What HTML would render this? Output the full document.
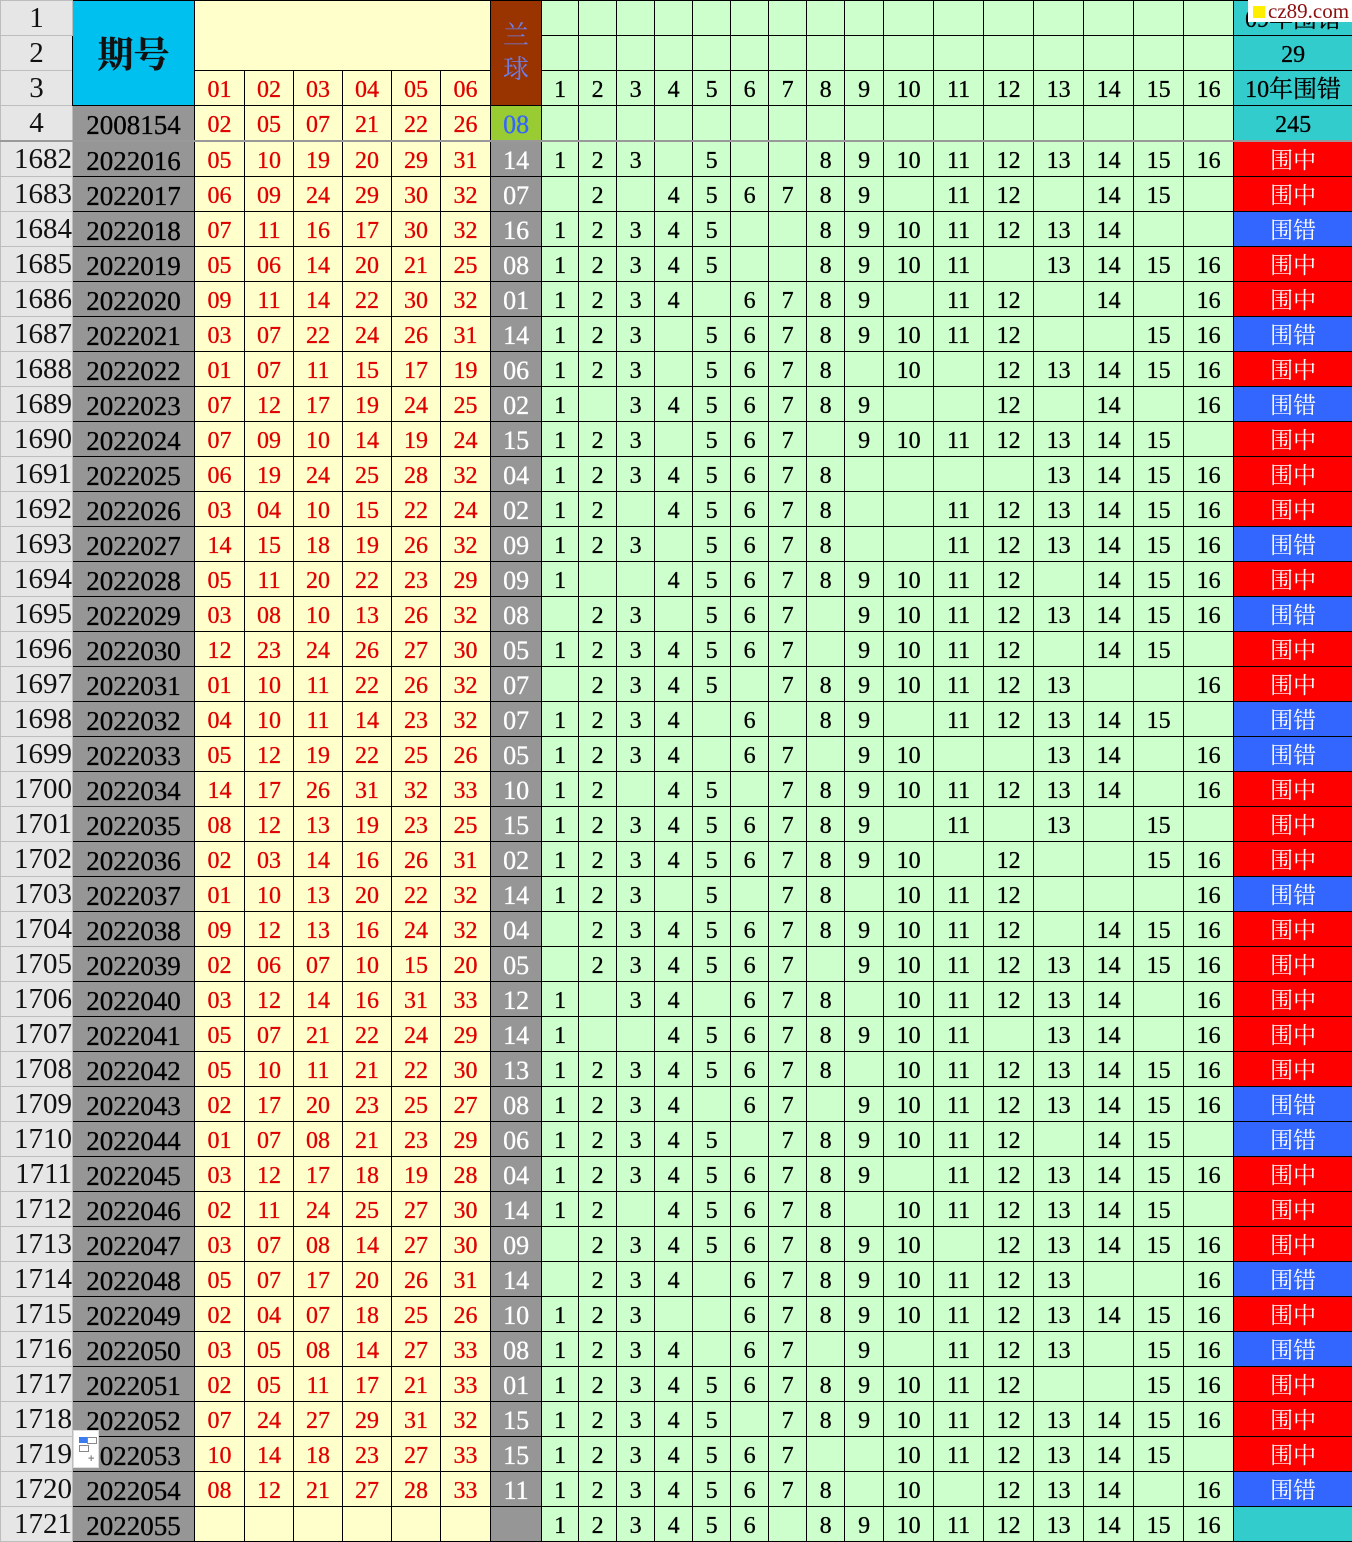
<!DOCTYPE html>
<html><head><meta charset="utf-8"><style>
body{margin:0;width:1352px;height:1542px;overflow:hidden;background:#fff;position:relative}
table{border-collapse:collapse;table-layout:fixed;position:absolute;left:0;top:0;width:1352px;font-family:"Liberation Serif","Noto Serif CJK SC",serif}
td{padding:4px 0 0 0;border:1px solid #000;text-align:center;white-space:nowrap;overflow:hidden;height:30px;line-height:30px;-webkit-text-stroke:0.3px}
tr{height:35px}
.n{background:#e6e6e6;border:1px solid #bdbdbd;font-size:29px;color:#111;text-align:right;-webkit-text-stroke:0;padding-top:0;height:34px;line-height:34px}
.p{background:#969696;font-size:27px;color:#000}
.r{background:#ffffcc;color:#e00000;font-size:24px}
.b{background:#969696;color:#fff;font-size:26px}
.g{background:#ccffcc;color:#000;font-size:24px}
.z{background:#ff0000;color:#fff;font-size:23px;-webkit-text-stroke:0}
.c{background:#3366ff;color:#fff;font-size:23px;-webkit-text-stroke:0}
.t{background:#33cccc;color:#000;font-size:24px}
.hd td{border-bottom:2px solid #999}
</style></head><body>
<table>
<colgroup><col style="width:72px"><col style="width:122px"><col style="width:50px"><col style="width:49px"><col style="width:49px"><col style="width:49px"><col style="width:49px"><col style="width:50px"><col style="width:51px"><col style="width:37px"><col style="width:38px"><col style="width:38px"><col style="width:38px"><col style="width:38px"><col style="width:38px"><col style="width:38px"><col style="width:38px"><col style="width:39px"><col style="width:50px"><col style="width:50px"><col style="width:50px"><col style="width:50px"><col style="width:50px"><col style="width:50px"><col style="width:50px"><col style="width:119px"></colgroup>
<tr><td class="n" style="text-align:center">1</td><td rowspan="3" style="background:#00c0f0;font-size:36px;font-weight:bold;color:#111;line-height:40px">期号</td><td colspan="6" rowspan="2" class="r"></td><td rowspan="3" style="background:#993300;color:#6f7fe8;font-size:26px;line-height:34px;white-space:normal;-webkit-text-stroke:0;padding:0">兰<br>球</td><td class="g"></td><td class="g"></td><td class="g"></td><td class="g"></td><td class="g"></td><td class="g"></td><td class="g"></td><td class="g"></td><td class="g"></td><td class="g"></td><td class="g"></td><td class="g"></td><td class="g"></td><td class="g"></td><td class="g"></td><td class="g"></td><td class="t">09年围错</td></tr>
<tr><td class="n" style="text-align:center">2</td><td class="g"></td><td class="g"></td><td class="g"></td><td class="g"></td><td class="g"></td><td class="g"></td><td class="g"></td><td class="g"></td><td class="g"></td><td class="g"></td><td class="g"></td><td class="g"></td><td class="g"></td><td class="g"></td><td class="g"></td><td class="g"></td><td class="t">29</td></tr>
<tr><td class="n" style="text-align:center">3</td><td class="r">01</td><td class="r">02</td><td class="r">03</td><td class="r">04</td><td class="r">05</td><td class="r">06</td><td class="g">1</td><td class="g">2</td><td class="g">3</td><td class="g">4</td><td class="g">5</td><td class="g">6</td><td class="g">7</td><td class="g">8</td><td class="g">9</td><td class="g">10</td><td class="g">11</td><td class="g">12</td><td class="g">13</td><td class="g">14</td><td class="g">15</td><td class="g">16</td><td class="t">10年围错</td></tr>
<tr class="hd"><td class="n" style="text-align:center">4</td><td class="p">2008154</td><td class="r">02</td><td class="r">05</td><td class="r">07</td><td class="r">21</td><td class="r">22</td><td class="r">26</td><td style="background:#99cc33;color:#3366ff;font-size:26px">08</td><td class="g"></td><td class="g"></td><td class="g"></td><td class="g"></td><td class="g"></td><td class="g"></td><td class="g"></td><td class="g"></td><td class="g"></td><td class="g"></td><td class="g"></td><td class="g"></td><td class="g"></td><td class="g"></td><td class="g"></td><td class="g"></td><td class="t">245</td></tr>
<tr><td class="n">1682</td><td class="p">2022016</td><td class="r">05</td><td class="r">10</td><td class="r">19</td><td class="r">20</td><td class="r">29</td><td class="r">31</td><td class="b">14</td><td class="g">1</td><td class="g">2</td><td class="g">3</td><td class="g"></td><td class="g">5</td><td class="g"></td><td class="g"></td><td class="g">8</td><td class="g">9</td><td class="g">10</td><td class="g">11</td><td class="g">12</td><td class="g">13</td><td class="g">14</td><td class="g">15</td><td class="g">16</td><td class="z">围中</td></tr>
<tr><td class="n">1683</td><td class="p">2022017</td><td class="r">06</td><td class="r">09</td><td class="r">24</td><td class="r">29</td><td class="r">30</td><td class="r">32</td><td class="b">07</td><td class="g"></td><td class="g">2</td><td class="g"></td><td class="g">4</td><td class="g">5</td><td class="g">6</td><td class="g">7</td><td class="g">8</td><td class="g">9</td><td class="g"></td><td class="g">11</td><td class="g">12</td><td class="g"></td><td class="g">14</td><td class="g">15</td><td class="g"></td><td class="z">围中</td></tr>
<tr><td class="n">1684</td><td class="p">2022018</td><td class="r">07</td><td class="r">11</td><td class="r">16</td><td class="r">17</td><td class="r">30</td><td class="r">32</td><td class="b">16</td><td class="g">1</td><td class="g">2</td><td class="g">3</td><td class="g">4</td><td class="g">5</td><td class="g"></td><td class="g"></td><td class="g">8</td><td class="g">9</td><td class="g">10</td><td class="g">11</td><td class="g">12</td><td class="g">13</td><td class="g">14</td><td class="g"></td><td class="g"></td><td class="c">围错</td></tr>
<tr><td class="n">1685</td><td class="p">2022019</td><td class="r">05</td><td class="r">06</td><td class="r">14</td><td class="r">20</td><td class="r">21</td><td class="r">25</td><td class="b">08</td><td class="g">1</td><td class="g">2</td><td class="g">3</td><td class="g">4</td><td class="g">5</td><td class="g"></td><td class="g"></td><td class="g">8</td><td class="g">9</td><td class="g">10</td><td class="g">11</td><td class="g"></td><td class="g">13</td><td class="g">14</td><td class="g">15</td><td class="g">16</td><td class="z">围中</td></tr>
<tr><td class="n">1686</td><td class="p">2022020</td><td class="r">09</td><td class="r">11</td><td class="r">14</td><td class="r">22</td><td class="r">30</td><td class="r">32</td><td class="b">01</td><td class="g">1</td><td class="g">2</td><td class="g">3</td><td class="g">4</td><td class="g"></td><td class="g">6</td><td class="g">7</td><td class="g">8</td><td class="g">9</td><td class="g"></td><td class="g">11</td><td class="g">12</td><td class="g"></td><td class="g">14</td><td class="g"></td><td class="g">16</td><td class="z">围中</td></tr>
<tr><td class="n">1687</td><td class="p">2022021</td><td class="r">03</td><td class="r">07</td><td class="r">22</td><td class="r">24</td><td class="r">26</td><td class="r">31</td><td class="b">14</td><td class="g">1</td><td class="g">2</td><td class="g">3</td><td class="g"></td><td class="g">5</td><td class="g">6</td><td class="g">7</td><td class="g">8</td><td class="g">9</td><td class="g">10</td><td class="g">11</td><td class="g">12</td><td class="g"></td><td class="g"></td><td class="g">15</td><td class="g">16</td><td class="c">围错</td></tr>
<tr><td class="n">1688</td><td class="p">2022022</td><td class="r">01</td><td class="r">07</td><td class="r">11</td><td class="r">15</td><td class="r">17</td><td class="r">19</td><td class="b">06</td><td class="g">1</td><td class="g">2</td><td class="g">3</td><td class="g"></td><td class="g">5</td><td class="g">6</td><td class="g">7</td><td class="g">8</td><td class="g"></td><td class="g">10</td><td class="g"></td><td class="g">12</td><td class="g">13</td><td class="g">14</td><td class="g">15</td><td class="g">16</td><td class="z">围中</td></tr>
<tr><td class="n">1689</td><td class="p">2022023</td><td class="r">07</td><td class="r">12</td><td class="r">17</td><td class="r">19</td><td class="r">24</td><td class="r">25</td><td class="b">02</td><td class="g">1</td><td class="g"></td><td class="g">3</td><td class="g">4</td><td class="g">5</td><td class="g">6</td><td class="g">7</td><td class="g">8</td><td class="g">9</td><td class="g"></td><td class="g"></td><td class="g">12</td><td class="g"></td><td class="g">14</td><td class="g"></td><td class="g">16</td><td class="c">围错</td></tr>
<tr><td class="n">1690</td><td class="p">2022024</td><td class="r">07</td><td class="r">09</td><td class="r">10</td><td class="r">14</td><td class="r">19</td><td class="r">24</td><td class="b">15</td><td class="g">1</td><td class="g">2</td><td class="g">3</td><td class="g"></td><td class="g">5</td><td class="g">6</td><td class="g">7</td><td class="g"></td><td class="g">9</td><td class="g">10</td><td class="g">11</td><td class="g">12</td><td class="g">13</td><td class="g">14</td><td class="g">15</td><td class="g"></td><td class="z">围中</td></tr>
<tr><td class="n">1691</td><td class="p">2022025</td><td class="r">06</td><td class="r">19</td><td class="r">24</td><td class="r">25</td><td class="r">28</td><td class="r">32</td><td class="b">04</td><td class="g">1</td><td class="g">2</td><td class="g">3</td><td class="g">4</td><td class="g">5</td><td class="g">6</td><td class="g">7</td><td class="g">8</td><td class="g"></td><td class="g"></td><td class="g"></td><td class="g"></td><td class="g">13</td><td class="g">14</td><td class="g">15</td><td class="g">16</td><td class="z">围中</td></tr>
<tr><td class="n">1692</td><td class="p">2022026</td><td class="r">03</td><td class="r">04</td><td class="r">10</td><td class="r">15</td><td class="r">22</td><td class="r">24</td><td class="b">02</td><td class="g">1</td><td class="g">2</td><td class="g"></td><td class="g">4</td><td class="g">5</td><td class="g">6</td><td class="g">7</td><td class="g">8</td><td class="g"></td><td class="g"></td><td class="g">11</td><td class="g">12</td><td class="g">13</td><td class="g">14</td><td class="g">15</td><td class="g">16</td><td class="z">围中</td></tr>
<tr><td class="n">1693</td><td class="p">2022027</td><td class="r">14</td><td class="r">15</td><td class="r">18</td><td class="r">19</td><td class="r">26</td><td class="r">32</td><td class="b">09</td><td class="g">1</td><td class="g">2</td><td class="g">3</td><td class="g"></td><td class="g">5</td><td class="g">6</td><td class="g">7</td><td class="g">8</td><td class="g"></td><td class="g"></td><td class="g">11</td><td class="g">12</td><td class="g">13</td><td class="g">14</td><td class="g">15</td><td class="g">16</td><td class="c">围错</td></tr>
<tr><td class="n">1694</td><td class="p">2022028</td><td class="r">05</td><td class="r">11</td><td class="r">20</td><td class="r">22</td><td class="r">23</td><td class="r">29</td><td class="b">09</td><td class="g">1</td><td class="g"></td><td class="g"></td><td class="g">4</td><td class="g">5</td><td class="g">6</td><td class="g">7</td><td class="g">8</td><td class="g">9</td><td class="g">10</td><td class="g">11</td><td class="g">12</td><td class="g"></td><td class="g">14</td><td class="g">15</td><td class="g">16</td><td class="z">围中</td></tr>
<tr><td class="n">1695</td><td class="p">2022029</td><td class="r">03</td><td class="r">08</td><td class="r">10</td><td class="r">13</td><td class="r">26</td><td class="r">32</td><td class="b">08</td><td class="g"></td><td class="g">2</td><td class="g">3</td><td class="g"></td><td class="g">5</td><td class="g">6</td><td class="g">7</td><td class="g"></td><td class="g">9</td><td class="g">10</td><td class="g">11</td><td class="g">12</td><td class="g">13</td><td class="g">14</td><td class="g">15</td><td class="g">16</td><td class="c">围错</td></tr>
<tr><td class="n">1696</td><td class="p">2022030</td><td class="r">12</td><td class="r">23</td><td class="r">24</td><td class="r">26</td><td class="r">27</td><td class="r">30</td><td class="b">05</td><td class="g">1</td><td class="g">2</td><td class="g">3</td><td class="g">4</td><td class="g">5</td><td class="g">6</td><td class="g">7</td><td class="g"></td><td class="g">9</td><td class="g">10</td><td class="g">11</td><td class="g">12</td><td class="g"></td><td class="g">14</td><td class="g">15</td><td class="g"></td><td class="z">围中</td></tr>
<tr><td class="n">1697</td><td class="p">2022031</td><td class="r">01</td><td class="r">10</td><td class="r">11</td><td class="r">22</td><td class="r">26</td><td class="r">32</td><td class="b">07</td><td class="g"></td><td class="g">2</td><td class="g">3</td><td class="g">4</td><td class="g">5</td><td class="g"></td><td class="g">7</td><td class="g">8</td><td class="g">9</td><td class="g">10</td><td class="g">11</td><td class="g">12</td><td class="g">13</td><td class="g"></td><td class="g"></td><td class="g">16</td><td class="z">围中</td></tr>
<tr><td class="n">1698</td><td class="p">2022032</td><td class="r">04</td><td class="r">10</td><td class="r">11</td><td class="r">14</td><td class="r">23</td><td class="r">32</td><td class="b">07</td><td class="g">1</td><td class="g">2</td><td class="g">3</td><td class="g">4</td><td class="g"></td><td class="g">6</td><td class="g"></td><td class="g">8</td><td class="g">9</td><td class="g"></td><td class="g">11</td><td class="g">12</td><td class="g">13</td><td class="g">14</td><td class="g">15</td><td class="g"></td><td class="c">围错</td></tr>
<tr><td class="n">1699</td><td class="p">2022033</td><td class="r">05</td><td class="r">12</td><td class="r">19</td><td class="r">22</td><td class="r">25</td><td class="r">26</td><td class="b">05</td><td class="g">1</td><td class="g">2</td><td class="g">3</td><td class="g">4</td><td class="g"></td><td class="g">6</td><td class="g">7</td><td class="g"></td><td class="g">9</td><td class="g">10</td><td class="g"></td><td class="g"></td><td class="g">13</td><td class="g">14</td><td class="g"></td><td class="g">16</td><td class="c">围错</td></tr>
<tr><td class="n">1700</td><td class="p">2022034</td><td class="r">14</td><td class="r">17</td><td class="r">26</td><td class="r">31</td><td class="r">32</td><td class="r">33</td><td class="b">10</td><td class="g">1</td><td class="g">2</td><td class="g"></td><td class="g">4</td><td class="g">5</td><td class="g"></td><td class="g">7</td><td class="g">8</td><td class="g">9</td><td class="g">10</td><td class="g">11</td><td class="g">12</td><td class="g">13</td><td class="g">14</td><td class="g"></td><td class="g">16</td><td class="z">围中</td></tr>
<tr><td class="n">1701</td><td class="p">2022035</td><td class="r">08</td><td class="r">12</td><td class="r">13</td><td class="r">19</td><td class="r">23</td><td class="r">25</td><td class="b">15</td><td class="g">1</td><td class="g">2</td><td class="g">3</td><td class="g">4</td><td class="g">5</td><td class="g">6</td><td class="g">7</td><td class="g">8</td><td class="g">9</td><td class="g"></td><td class="g">11</td><td class="g"></td><td class="g">13</td><td class="g"></td><td class="g">15</td><td class="g"></td><td class="z">围中</td></tr>
<tr><td class="n">1702</td><td class="p">2022036</td><td class="r">02</td><td class="r">03</td><td class="r">14</td><td class="r">16</td><td class="r">26</td><td class="r">31</td><td class="b">02</td><td class="g">1</td><td class="g">2</td><td class="g">3</td><td class="g">4</td><td class="g">5</td><td class="g">6</td><td class="g">7</td><td class="g">8</td><td class="g">9</td><td class="g">10</td><td class="g"></td><td class="g">12</td><td class="g"></td><td class="g"></td><td class="g">15</td><td class="g">16</td><td class="z">围中</td></tr>
<tr><td class="n">1703</td><td class="p">2022037</td><td class="r">01</td><td class="r">10</td><td class="r">13</td><td class="r">20</td><td class="r">22</td><td class="r">32</td><td class="b">14</td><td class="g">1</td><td class="g">2</td><td class="g">3</td><td class="g"></td><td class="g">5</td><td class="g"></td><td class="g">7</td><td class="g">8</td><td class="g"></td><td class="g">10</td><td class="g">11</td><td class="g">12</td><td class="g"></td><td class="g"></td><td class="g"></td><td class="g">16</td><td class="c">围错</td></tr>
<tr><td class="n">1704</td><td class="p">2022038</td><td class="r">09</td><td class="r">12</td><td class="r">13</td><td class="r">16</td><td class="r">24</td><td class="r">32</td><td class="b">04</td><td class="g"></td><td class="g">2</td><td class="g">3</td><td class="g">4</td><td class="g">5</td><td class="g">6</td><td class="g">7</td><td class="g">8</td><td class="g">9</td><td class="g">10</td><td class="g">11</td><td class="g">12</td><td class="g"></td><td class="g">14</td><td class="g">15</td><td class="g">16</td><td class="z">围中</td></tr>
<tr><td class="n">1705</td><td class="p">2022039</td><td class="r">02</td><td class="r">06</td><td class="r">07</td><td class="r">10</td><td class="r">15</td><td class="r">20</td><td class="b">05</td><td class="g"></td><td class="g">2</td><td class="g">3</td><td class="g">4</td><td class="g">5</td><td class="g">6</td><td class="g">7</td><td class="g"></td><td class="g">9</td><td class="g">10</td><td class="g">11</td><td class="g">12</td><td class="g">13</td><td class="g">14</td><td class="g">15</td><td class="g">16</td><td class="z">围中</td></tr>
<tr><td class="n">1706</td><td class="p">2022040</td><td class="r">03</td><td class="r">12</td><td class="r">14</td><td class="r">16</td><td class="r">31</td><td class="r">33</td><td class="b">12</td><td class="g">1</td><td class="g"></td><td class="g">3</td><td class="g">4</td><td class="g"></td><td class="g">6</td><td class="g">7</td><td class="g">8</td><td class="g"></td><td class="g">10</td><td class="g">11</td><td class="g">12</td><td class="g">13</td><td class="g">14</td><td class="g"></td><td class="g">16</td><td class="z">围中</td></tr>
<tr><td class="n">1707</td><td class="p">2022041</td><td class="r">05</td><td class="r">07</td><td class="r">21</td><td class="r">22</td><td class="r">24</td><td class="r">29</td><td class="b">14</td><td class="g">1</td><td class="g"></td><td class="g"></td><td class="g">4</td><td class="g">5</td><td class="g">6</td><td class="g">7</td><td class="g">8</td><td class="g">9</td><td class="g">10</td><td class="g">11</td><td class="g"></td><td class="g">13</td><td class="g">14</td><td class="g"></td><td class="g">16</td><td class="z">围中</td></tr>
<tr><td class="n">1708</td><td class="p">2022042</td><td class="r">05</td><td class="r">10</td><td class="r">11</td><td class="r">21</td><td class="r">22</td><td class="r">30</td><td class="b">13</td><td class="g">1</td><td class="g">2</td><td class="g">3</td><td class="g">4</td><td class="g">5</td><td class="g">6</td><td class="g">7</td><td class="g">8</td><td class="g"></td><td class="g">10</td><td class="g">11</td><td class="g">12</td><td class="g">13</td><td class="g">14</td><td class="g">15</td><td class="g">16</td><td class="z">围中</td></tr>
<tr><td class="n">1709</td><td class="p">2022043</td><td class="r">02</td><td class="r">17</td><td class="r">20</td><td class="r">23</td><td class="r">25</td><td class="r">27</td><td class="b">08</td><td class="g">1</td><td class="g">2</td><td class="g">3</td><td class="g">4</td><td class="g"></td><td class="g">6</td><td class="g">7</td><td class="g"></td><td class="g">9</td><td class="g">10</td><td class="g">11</td><td class="g">12</td><td class="g">13</td><td class="g">14</td><td class="g">15</td><td class="g">16</td><td class="c">围错</td></tr>
<tr><td class="n">1710</td><td class="p">2022044</td><td class="r">01</td><td class="r">07</td><td class="r">08</td><td class="r">21</td><td class="r">23</td><td class="r">29</td><td class="b">06</td><td class="g">1</td><td class="g">2</td><td class="g">3</td><td class="g">4</td><td class="g">5</td><td class="g"></td><td class="g">7</td><td class="g">8</td><td class="g">9</td><td class="g">10</td><td class="g">11</td><td class="g">12</td><td class="g"></td><td class="g">14</td><td class="g">15</td><td class="g"></td><td class="c">围错</td></tr>
<tr><td class="n">1711</td><td class="p">2022045</td><td class="r">03</td><td class="r">12</td><td class="r">17</td><td class="r">18</td><td class="r">19</td><td class="r">28</td><td class="b">04</td><td class="g">1</td><td class="g">2</td><td class="g">3</td><td class="g">4</td><td class="g">5</td><td class="g">6</td><td class="g">7</td><td class="g">8</td><td class="g">9</td><td class="g"></td><td class="g">11</td><td class="g">12</td><td class="g">13</td><td class="g">14</td><td class="g">15</td><td class="g">16</td><td class="z">围中</td></tr>
<tr><td class="n">1712</td><td class="p">2022046</td><td class="r">02</td><td class="r">11</td><td class="r">24</td><td class="r">25</td><td class="r">27</td><td class="r">30</td><td class="b">14</td><td class="g">1</td><td class="g">2</td><td class="g"></td><td class="g">4</td><td class="g">5</td><td class="g">6</td><td class="g">7</td><td class="g">8</td><td class="g"></td><td class="g">10</td><td class="g">11</td><td class="g">12</td><td class="g">13</td><td class="g">14</td><td class="g">15</td><td class="g"></td><td class="z">围中</td></tr>
<tr><td class="n">1713</td><td class="p">2022047</td><td class="r">03</td><td class="r">07</td><td class="r">08</td><td class="r">14</td><td class="r">27</td><td class="r">30</td><td class="b">09</td><td class="g"></td><td class="g">2</td><td class="g">3</td><td class="g">4</td><td class="g">5</td><td class="g">6</td><td class="g">7</td><td class="g">8</td><td class="g">9</td><td class="g">10</td><td class="g"></td><td class="g">12</td><td class="g">13</td><td class="g">14</td><td class="g">15</td><td class="g">16</td><td class="z">围中</td></tr>
<tr><td class="n">1714</td><td class="p">2022048</td><td class="r">05</td><td class="r">07</td><td class="r">17</td><td class="r">20</td><td class="r">26</td><td class="r">31</td><td class="b">14</td><td class="g"></td><td class="g">2</td><td class="g">3</td><td class="g">4</td><td class="g"></td><td class="g">6</td><td class="g">7</td><td class="g">8</td><td class="g">9</td><td class="g">10</td><td class="g">11</td><td class="g">12</td><td class="g">13</td><td class="g"></td><td class="g"></td><td class="g">16</td><td class="c">围错</td></tr>
<tr><td class="n">1715</td><td class="p">2022049</td><td class="r">02</td><td class="r">04</td><td class="r">07</td><td class="r">18</td><td class="r">25</td><td class="r">26</td><td class="b">10</td><td class="g">1</td><td class="g">2</td><td class="g">3</td><td class="g"></td><td class="g"></td><td class="g">6</td><td class="g">7</td><td class="g">8</td><td class="g">9</td><td class="g">10</td><td class="g">11</td><td class="g">12</td><td class="g">13</td><td class="g">14</td><td class="g">15</td><td class="g">16</td><td class="z">围中</td></tr>
<tr><td class="n">1716</td><td class="p">2022050</td><td class="r">03</td><td class="r">05</td><td class="r">08</td><td class="r">14</td><td class="r">27</td><td class="r">33</td><td class="b">08</td><td class="g">1</td><td class="g">2</td><td class="g">3</td><td class="g">4</td><td class="g"></td><td class="g">6</td><td class="g">7</td><td class="g"></td><td class="g">9</td><td class="g"></td><td class="g">11</td><td class="g">12</td><td class="g">13</td><td class="g"></td><td class="g">15</td><td class="g">16</td><td class="c">围错</td></tr>
<tr><td class="n">1717</td><td class="p">2022051</td><td class="r">02</td><td class="r">05</td><td class="r">11</td><td class="r">17</td><td class="r">21</td><td class="r">33</td><td class="b">01</td><td class="g">1</td><td class="g">2</td><td class="g">3</td><td class="g">4</td><td class="g">5</td><td class="g">6</td><td class="g">7</td><td class="g">8</td><td class="g">9</td><td class="g">10</td><td class="g">11</td><td class="g">12</td><td class="g"></td><td class="g"></td><td class="g">15</td><td class="g">16</td><td class="z">围中</td></tr>
<tr><td class="n">1718</td><td class="p">2022052</td><td class="r">07</td><td class="r">24</td><td class="r">27</td><td class="r">29</td><td class="r">31</td><td class="r">32</td><td class="b">15</td><td class="g">1</td><td class="g">2</td><td class="g">3</td><td class="g">4</td><td class="g">5</td><td class="g"></td><td class="g">7</td><td class="g">8</td><td class="g">9</td><td class="g">10</td><td class="g">11</td><td class="g">12</td><td class="g">13</td><td class="g">14</td><td class="g">15</td><td class="g">16</td><td class="z">围中</td></tr>
<tr><td class="n">1719</td><td class="p">2022053</td><td class="r">10</td><td class="r">14</td><td class="r">18</td><td class="r">23</td><td class="r">27</td><td class="r">33</td><td class="b">15</td><td class="g">1</td><td class="g">2</td><td class="g">3</td><td class="g">4</td><td class="g">5</td><td class="g">6</td><td class="g">7</td><td class="g"></td><td class="g"></td><td class="g">10</td><td class="g">11</td><td class="g">12</td><td class="g">13</td><td class="g">14</td><td class="g">15</td><td class="g"></td><td class="z">围中</td></tr>
<tr><td class="n">1720</td><td class="p">2022054</td><td class="r">08</td><td class="r">12</td><td class="r">21</td><td class="r">27</td><td class="r">28</td><td class="r">33</td><td class="b">11</td><td class="g">1</td><td class="g">2</td><td class="g">3</td><td class="g">4</td><td class="g">5</td><td class="g">6</td><td class="g">7</td><td class="g">8</td><td class="g"></td><td class="g">10</td><td class="g"></td><td class="g">12</td><td class="g">13</td><td class="g">14</td><td class="g"></td><td class="g">16</td><td class="c">围错</td></tr>
<tr><td class="n">1721</td><td class="p">2022055</td><td class="r"></td><td class="r"></td><td class="r"></td><td class="r"></td><td class="r"></td><td class="r"></td><td class="b"></td><td class="g">1</td><td class="g">2</td><td class="g">3</td><td class="g">4</td><td class="g">5</td><td class="g">6</td><td class="g"></td><td class="g">8</td><td class="g">9</td><td class="g">10</td><td class="g">11</td><td class="g">12</td><td class="g">13</td><td class="g">14</td><td class="g">15</td><td class="g">16</td><td class="t"></td></tr>
</table>
<div style="position:absolute;left:1248px;top:0;width:104px;height:22px;background:#fff;font:21px 'Liberation Serif',serif;color:#8a1010;line-height:22px;white-space:nowrap"><span style="display:inline-block;width:12px;height:12px;background:#ffee00;margin:0 3px 0 5px"></span>cz89.com</div>
<div style="position:absolute;left:73px;top:1430px;width:24px;height:36px;background:#fff;border:1px solid #ddd">
<div style="position:absolute;left:5px;top:6px;width:8px;height:6px;background:#3a7bf0"></div>
<div style="position:absolute;left:13px;top:6px;width:8px;height:5px;border:1px solid #888"></div>
<div style="position:absolute;left:5px;top:14px;width:8px;height:5px;border:1px solid #888"></div>
<div style="position:absolute;left:14px;top:22px;font:bold 11px sans-serif;color:#888">+</div>
</div>
</body></html>
